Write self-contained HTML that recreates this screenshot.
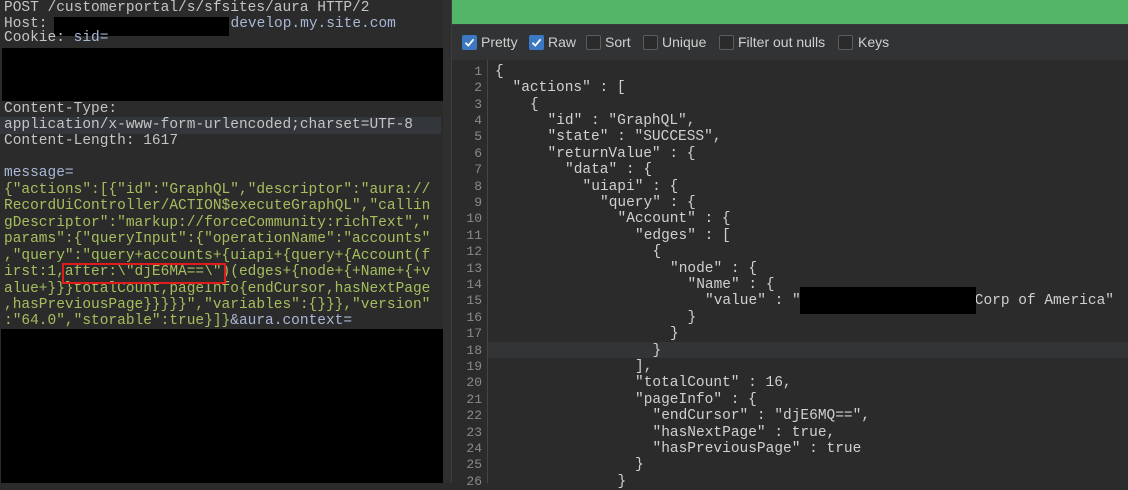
<!DOCTYPE html>
<html><head><meta charset="utf-8"><style>
*{margin:0;padding:0;box-sizing:border-box}
body{width:1128px;height:483px;overflow:hidden;background:#2b2b2b;position:relative;font-family:"Liberation Mono",monospace;font-size:14.5px}
.l{position:absolute;left:0;top:0;width:443px;height:483px;background:#2b2b2b}
.ln{position:absolute;left:4px;height:16.5px;line-height:16.5px;white-space:pre;color:#c4c4c4}
.b{color:#a9b7d6}.g{color:#a6bf5e}
.blk{position:absolute;background:#000}
.sep{position:absolute;left:443px;top:0;width:9px;height:483px;background:#2f2f2f;border-right:1px solid #3d3d3d}
.green{position:absolute;left:452px;top:0;width:676px;height:25px;background:#52b568;border-bottom:1px solid #3a3a3a}
.tb{position:absolute;left:452px;top:25px;width:676px;height:35px;background:#313335;font-family:"Liberation Sans",sans-serif;font-size:14px;color:#cfcfcf}
.cb{position:absolute;top:10px;width:15px;height:15px;border:1px solid #5a5d60;border-radius:2px;background:#2b2b2b}
.cb.on{background:#3d78c4;border-color:#3d78c4}
.lab{position:absolute;top:9px}
.code{position:absolute;left:452px;top:60px;width:676px;height:423px;background:#2b2b2b}
.gut{position:absolute;left:487px;top:60px;width:1px;height:423px;background:#454545}
.r{position:absolute;height:16.4px;line-height:16.4px;white-space:pre;color:#d0d0d0}
.num{position:absolute;left:452px;width:30px;text-align:right;height:16.4px;line-height:16.4px;color:#8a8a8a;font-size:13px}
</style></head><body>
<div class="l">
<div class="blk" style="left:54px;top:17px;width:175px;height:19px"></div>
<div class="blk" style="left:2px;top:48px;width:441px;height:53px"></div>
<div class="ln" style="top:0">POST /customerportal/s/sfsites/aura HTTP/2</div>
<div class="ln" style="top:15.5px">Host:<span style="display:inline-block;width:183px"></span><span class="b">develop.my.site.com</span></div>
<div class="ln" style="top:30px">Cookie: <span class="b">sid=</span></div>
<div class="ln" style="top:100.5px">Content-Type:</div>
<div style="position:absolute;left:0;top:117px;width:441px;height:17px;background:#33363a"></div>
<div class="ln" style="top:116.5px">application/x-www-form-urlencoded;charset=UTF-8</div>
<div class="ln" style="top:132.5px">Content-Length: 1617</div>
<div class="ln b" style="top:165px">message=</div>
<div class="ln g" style="top:181.5px">{"actions":[{"id":"GraphQL","descriptor":"aura://</div>
<div class="ln g" style="top:198px">RecordUiController/ACTION$executeGraphQL","callin</div>
<div class="ln g" style="top:214.5px">gDescriptor":"markup://forceCommunity:richText","</div>
<div class="ln g" style="top:231px">params":{"queryInput":{"operationName":"accounts"</div>
<div class="ln g" style="top:247.5px">,"query":"query+accounts+{uiapi+{query+{Account(f</div>
<div class="ln g" style="top:264px">irst:1,after:\"djE6MA==\")(edges+{node+{+Name+{+v</div>
<div class="ln g" style="top:280.5px">alue+}}}totalCount,pageInfo{endCursor,hasNextPage</div>
<div class="ln g" style="top:297px">,hasPreviousPage}}}}}","variables":{}}},"version"</div>
<div class="ln g" style="top:313px">:"64.0","storable":true}]}<span class="b">&amp;aura.context=</span></div>
<div class="blk" style="left:1px;top:329px;width:442px;height:154px"></div>
<div style="position:absolute;left:62px;top:263px;width:164px;height:21px;border:2px solid #e01b1b"></div>
</div>
<div class="sep"></div>
<div class="green"></div>
<div class="tb">
<div class="cb on" style="left:10px"><svg width="13" height="13" viewBox="0 0 13 13"><path d="M2.5 6.8l2.8 2.8 5.3-6.3" stroke="#fff" stroke-width="1.8" fill="none"/></svg></div><span class="lab" style="left:29px">Pretty</span>
<div class="cb on" style="left:77px"><svg width="13" height="13" viewBox="0 0 13 13"><path d="M2.5 6.8l2.8 2.8 5.3-6.3" stroke="#fff" stroke-width="1.8" fill="none"/></svg></div><span class="lab" style="left:96px">Raw</span>
<div class="cb" style="left:134px"></div><span class="lab" style="left:153px">Sort</span>
<div class="cb" style="left:191px"></div><span class="lab" style="left:210px">Unique</span>
<div class="cb" style="left:267px"></div><span class="lab" style="left:286px">Filter out nulls</span>
<div class="cb" style="left:386px"></div><span class="lab" style="left:406px">Keys</span>
</div>
<div class="code"></div>
<div style="position:absolute;left:488px;top:342px;width:640px;height:16.4px;background:#323436"></div>
<div class="gut"></div>
<div class="num" style="top:63.8px">1</div><div class="r" style="left:495px;top:63.8px">{</div>
<div class="num" style="top:80.2px">2</div><div class="r" style="left:512.5px;top:80.2px">"actions" : [</div>
<div class="num" style="top:96.6px">3</div><div class="r" style="left:530px;top:96.6px">{</div>
<div class="num" style="top:113px">4</div><div class="r" style="left:547.5px;top:113px">"id" : "GraphQL",</div>
<div class="num" style="top:129.4px">5</div><div class="r" style="left:547.5px;top:129.4px">"state" : "SUCCESS",</div>
<div class="num" style="top:145.8px">6</div><div class="r" style="left:547.5px;top:145.8px">"returnValue" : {</div>
<div class="num" style="top:162.2px">7</div><div class="r" style="left:565px;top:162.2px">"data" : {</div>
<div class="num" style="top:178.6px">8</div><div class="r" style="left:582.5px;top:178.6px">"uiapi" : {</div>
<div class="num" style="top:195px">9</div><div class="r" style="left:600px;top:195px">"query" : {</div>
<div class="num" style="top:211.4px">10</div><div class="r" style="left:617.5px;top:211.4px">"Account" : {</div>
<div class="num" style="top:227.8px">11</div><div class="r" style="left:635px;top:227.8px">"edges" : [</div>
<div class="num" style="top:244.2px">12</div><div class="r" style="left:652.5px;top:244.2px">{</div>
<div class="num" style="top:260.6px">13</div><div class="r" style="left:670px;top:260.6px">"node" : {</div>
<div class="num" style="top:277px">14</div><div class="r" style="left:687.5px;top:277px">"Name" : {</div>
<div class="num" style="top:293.4px">15</div><div class="r" style="left:705px;top:293.4px">"value" : "                    Corp of America"</div>
<div class="num" style="top:309.8px">16</div><div class="r" style="left:687.5px;top:309.8px">}</div>
<div class="num" style="top:326.2px">17</div><div class="r" style="left:670px;top:326.2px">}</div>
<div class="num" style="top:342.6px">18</div><div class="r" style="left:652.5px;top:342.6px">}</div>
<div class="num" style="top:359px">19</div><div class="r" style="left:635px;top:359px">],</div>
<div class="num" style="top:375.4px">20</div><div class="r" style="left:635px;top:375.4px">"totalCount" : 16,</div>
<div class="num" style="top:391.8px">21</div><div class="r" style="left:635px;top:391.8px">"pageInfo" : {</div>
<div class="num" style="top:408.2px">22</div><div class="r" style="left:652.5px;top:408.2px">"endCursor" : "djE6MQ==",</div>
<div class="num" style="top:424.6px">23</div><div class="r" style="left:652.5px;top:424.6px">"hasNextPage" : true,</div>
<div class="num" style="top:441px">24</div><div class="r" style="left:652.5px;top:441px">"hasPreviousPage" : true</div>
<div class="num" style="top:457.4px">25</div><div class="r" style="left:635px;top:457.4px">}</div>
<div class="num" style="top:473.8px">26</div><div class="r" style="left:617.5px;top:473.8px">}</div>
<div class="blk" style="left:800px;top:287px;width:176px;height:27px"></div>
</body></html>
